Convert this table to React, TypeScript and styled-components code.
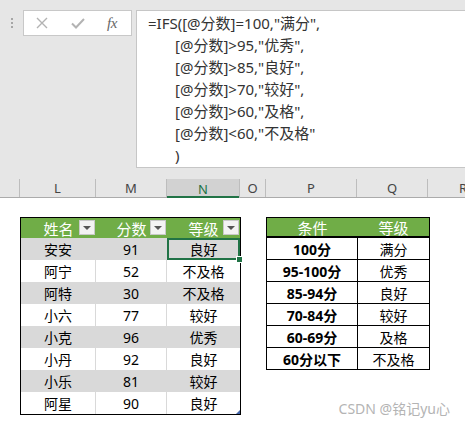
import React from "react";
import styled, { createGlobalStyle } from "styled-components";

const GlobalStyle = createGlobalStyle`
  html, body { margin: 0; padding: 0; background: #fff; }
  body { font-family: "Noto Sans", "Noto Sans CJK SC", sans-serif; }
`;

const Page = styled.div`
  width: 465px;
  height: 426px;
  position: relative;
  overflow: hidden;
  background: #fff;
  font-family: "Noto Sans", "Noto Sans CJK SC", sans-serif;
`;

const Chrome = styled.div`
  background: #e6e6e6;
  padding-top: 10px;
`;

const FormulaBar = styled.div`
  display: flex;
  height: 158px;
`;

const NameArea = styled.div`
  width: 136px;
  display: flex;
  align-items: flex-start;
`;

const Grip = styled.div`
  width: 23px;
  height: 26px;
  display: flex;
  flex-direction: column;
  align-items: center;
  justify-content: center;
  gap: 2px;
  & > span {
    width: 2px;
    height: 2px;
    background: #a6a6a6;
  }
`;

const ActionBox = styled.div`
  width: 109px;
  height: 26px;
  box-sizing: border-box;
  background: #fff;
  border: 1px solid #c8c8c8;
  display: flex;
  align-items: center;
  padding-left: 12px;
  gap: 23px;
`;

const Fx = styled.span`
  font-family: "Liberation Serif", serif;
  font-style: italic;
  font-size: 15px;
  color: #666;
  letter-spacing: -0.5px;
  margin-left: -1px;
`;

const FormulaBox = styled.div`
  flex: 1;
  box-sizing: border-box;
  background: #fff;
  border-left: 1px solid #c6c6c6;
  border-top: 1px solid #c6c6c6;
  border-bottom: 1px solid #c6c6c6;
  padding: 1px 0 0 11px;
  font-size: 15px;
  line-height: 22px;
  color: #333;
  white-space: pre;
`;

const FormulaLine = styled.div<{ $indent?: boolean }>`
  padding-left: ${(p) => (p.$indent ? "27px" : "0")};
`;

const ColumnHeaders = styled.div`
  margin-top: 11px;
  height: 18px;
  display: flex;
  border-bottom: 1px solid #ababab;
`;

const ColHead = styled.div<{ $w: number; $sel?: boolean }>`
  width: ${(p) => p.$w}px;
  flex: none;
  box-sizing: border-box;
  border-right: 1px solid #bdbdbd;
  display: flex;
  align-items: center;
  justify-content: center;
  font-size: 13px;
  color: ${(p) => (p.$sel ? "#217346" : "#444")};
  background: ${(p) => (p.$sel ? "#d2d2d2" : "transparent")};
  box-shadow: ${(p) => (p.$sel ? "inset 0 -2px 0 #217346" : "none")};
  margin-bottom: ${(p) => (p.$sel ? "-1px" : "0")};
`;

const Sheet = styled.div`
  display: flex;
  align-items: flex-start;
  gap: 25px;
  padding: 19px 0 0 20px;
`;

const Grid = styled.div<{ $cols: string }>`
  position: relative;
  display: grid;
  grid-template-columns: ${(p) => p.$cols};
  border: 1px solid #000;
  font-family: "Noto Sans", "Noto Sans CJK SC", sans-serif;
  font-size: 14px;
  color: #000;
`;

const HeadCell = styled.div`
  position: relative;
  height: 20px;
  background: #70ad47;
  color: #fff;
  display: flex;
  align-items: center;
  justify-content: center;
  font-size: 15px;
`;

const FilterBtn = styled.span`
  position: absolute;
  right: 1px;
  top: 2px;
  width: 16px;
  height: 15px;
  box-sizing: border-box;
  background: #f3f3f3;
  border: 1px solid #c9c9c9;
  display: flex;
  align-items: center;
  justify-content: center;
  &::after {
    content: "";
    border-left: 4px solid transparent;
    border-right: 4px solid transparent;
    border-top: 4px solid #555;
  }
`;

const Cell = styled.div<{ $band: boolean; $last: boolean; $sel?: boolean }>`
  position: relative;
  height: 22px;
  box-sizing: border-box;
  background: ${(p) => (p.$band ? "#d9d9d9" : "#fff")};
  border-right: ${(p) => (p.$last ? "none" : "1px solid #d9d9d9")};
  display: flex;
  align-items: center;
  justify-content: center;
  box-shadow: ${(p) => (p.$sel ? "inset 0 0 0 2px #217346" : "none")};
`;

const FillHandle = styled.span`
  position: absolute;
  right: -3px;
  bottom: -3px;
  width: 5px;
  height: 5px;
  background: #217346;
  border: 1px solid #fff;
  z-index: 2;
`;

const ResizeMark = styled.span`
  position: absolute;
  right: 0;
  bottom: 0;
  width: 0;
  height: 0;
  border-left: 4px solid transparent;
  border-bottom: 4px solid #4466aa;
`;

const RuleHead = styled.div`
  height: 18px;
  background: #70ad47;
  color: #fff;
  border-bottom: 2px solid #000;
  display: flex;
  align-items: center;
  justify-content: center;
  font-size: 15px;
`;

const RuleCell = styled.div<{ $bold?: boolean; $lastRow: boolean }>`
  height: 21px;
  display: flex;
  align-items: center;
  justify-content: center;
  font-weight: ${(p) => (p.$bold ? 700 : 400)};
  border-bottom: ${(p) => (p.$lastRow ? "none" : "1px solid #000")};
  border-right: ${(p) => (p.$bold ? "1px solid #000" : "none")};
`;

const Watermark = styled.div`
  position: absolute;
  right: 15px;
  bottom: 8px;
  font-size: 14px;
  color: #b4b4b4;
  font-family: "Noto Sans", "Noto Sans CJK SC", sans-serif;
`;

const columns: { label: string; w: number; sel?: boolean }[] = [
  { label: "", w: 20 },
  { label: "L", w: 76 },
  { label: "M", w: 71 },
  { label: "N", w: 73, sel: true },
  { label: "O", w: 26 },
  { label: "P", w: 91 },
  { label: "Q", w: 71 },
  { label: "R", w: 71 },
];

const students: [string, number, string][] = [
  ["安安", 91, "良好"],
  ["阿宁", 52, "不及格"],
  ["阿特", 30, "不及格"],
  ["小六", 77, "较好"],
  ["小克", 96, "优秀"],
  ["小丹", 92, "良好"],
  ["小乐", 81, "较好"],
  ["阿星", 90, "良好"],
];

const rules: [string, string][] = [
  ["100分", "满分"],
  ["95-100分", "优秀"],
  ["85-94分", "良好"],
  ["70-84分", "较好"],
  ["60-69分", "及格"],
  ["60分以下", "不及格"],
];

const formula = [
  `=IFS([@分数]=100,"满分",`,
  `[@分数]>95,"优秀",`,
  `[@分数]>85,"良好",`,
  `[@分数]>70,"较好",`,
  `[@分数]>60,"及格",`,
  `[@分数]<60,"不及格"`,
  `)`,
];

export default function App() {
  return (
    <Page>
      <GlobalStyle />
      <Chrome>
        <FormulaBar>
          <NameArea>
            <Grip>
              <span />
              <span />
              <span />
            </Grip>
            <ActionBox>
              <svg width="12" height="12" viewBox="0 0 12 12">
                <path d="M1 1 L11 11 M11 1 L1 11" stroke="#b3b3b3" strokeWidth="1.4" fill="none" />
              </svg>
              <svg width="14" height="11" viewBox="0 0 14 11">
                <path d="M1 5.5 L5 9.5 L13 1" stroke="#b3b3b3" strokeWidth="2" fill="none" />
              </svg>
              <Fx>fx</Fx>
            </ActionBox>
          </NameArea>
          <FormulaBox>
            {formula.map((l, i) => (
              <FormulaLine key={i} $indent={i > 0}>
                {l}
              </FormulaLine>
            ))}
          </FormulaBox>
        </FormulaBar>
        <ColumnHeaders>
          {columns.map((c, i) => (
            <ColHead key={i} $w={c.w} $sel={c.sel}>
              {c.label}
            </ColHead>
          ))}
        </ColumnHeaders>
      </Chrome>
      <Sheet>
        <Grid $cols="75px 71px 73px">
          {["姓名", "分数", "等级"].map((h) => (
            <HeadCell key={h}>
              {h}
              <FilterBtn />
            </HeadCell>
          ))}
          {students.map(([name, score, grade], r) => {
            const band = r % 2 === 0;
            return (
              <React.Fragment key={name + r}>
                <Cell $band={band} $last={false}>{name}</Cell>
                <Cell $band={band} $last={false}>{score}</Cell>
                <Cell $band={band} $last={true} $sel={r === 0}>
                  {grade}
                  {r === 0 && <FillHandle />}
                </Cell>
              </React.Fragment>
            );
          })}
          <ResizeMark />
        </Grid>
        <Grid $cols="91px 71px">
          <RuleHead>条件</RuleHead>
          <RuleHead>等级</RuleHead>
          {rules.map(([cond, grade], r) => (
            <React.Fragment key={cond}>
              <RuleCell $bold $lastRow={r === rules.length - 1}>{cond}</RuleCell>
              <RuleCell $lastRow={r === rules.length - 1}>{grade}</RuleCell>
            </React.Fragment>
          ))}
        </Grid>
      </Sheet>
      <Watermark>CSDN @铭记yu心</Watermark>
    </Page>
  );
}
